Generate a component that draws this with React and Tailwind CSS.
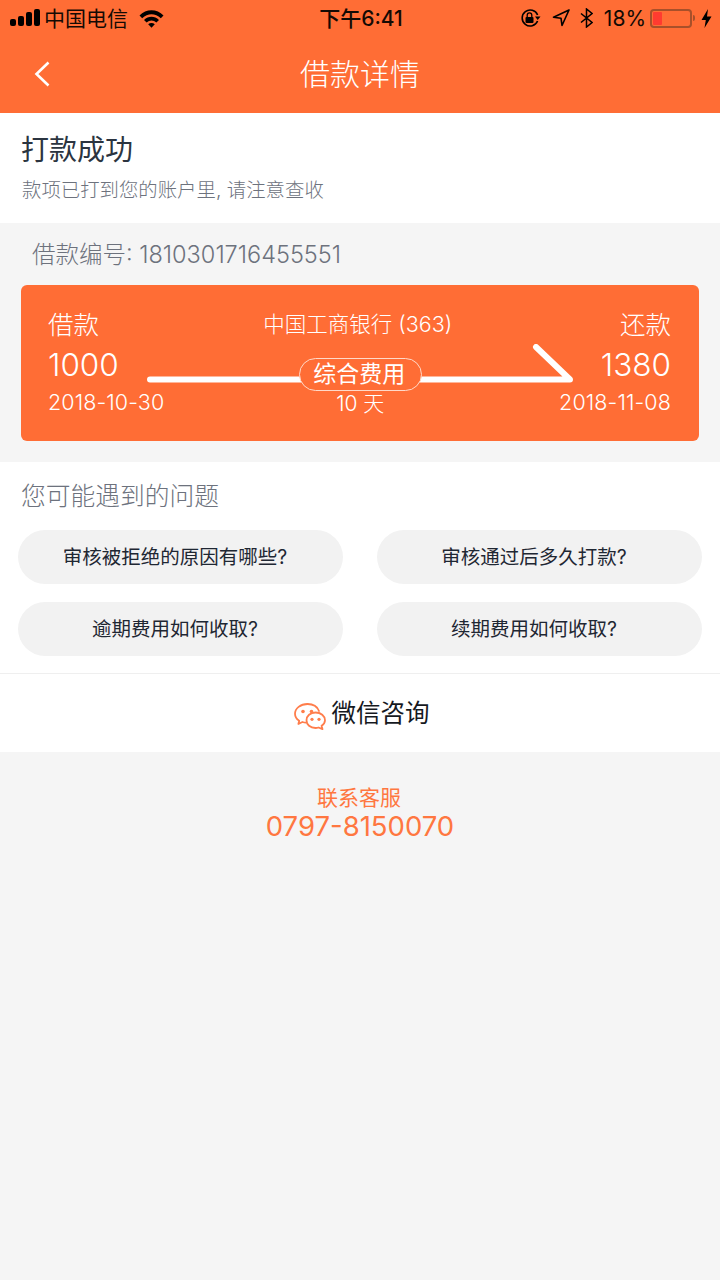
import React from "react";

const questions = [
  "审核被拒绝的原因有哪些?",
  "审核通过后多久打款?",
  "逾期费用如何收取?",
  "续期费用如何收取?",
];

function StatusBar() {
  return (
    <div className="h-[36px] flex items-center justify-between pl-[10px] pr-[8px] text-[#140a04]">
      <div className="flex items-center w-[240px]">
        <div className="flex items-end gap-[2px] h-[17px] mb-[1px]">
          <span className="w-[6px] h-[7px] bg-black rounded-[2px]" />
          <span className="w-[6px] h-[10px] bg-black rounded-[2px]" />
          <span className="w-[6px] h-[14px] bg-black rounded-[2px]" />
          <span className="w-[6px] h-[17px] bg-black rounded-[2px]" />
        </div>
        <span className="ml-[4px] text-[21px] leading-none">中国电信</span>
        <svg className="ml-[11px]" width="25" height="19" viewBox="0 0 25 19">
          <path d="M0.5 6.4 C7 -0.6 18 -0.6 24.5 6.4 L21.8 9.2 C16.4 3.8 8.6 3.8 3.2 9.2 Z" fill="#000" />
          <path d="M5 10.9 C9.4 6.6 15.6 6.6 20 10.9 L17.4 13.6 C14.4 10.8 10.6 10.8 7.6 13.6 Z" fill="#000" />
          <path d="M9.2 15.2 C11.1 13.5 13.9 13.5 15.8 15.2 L12.5 18.8 Z" fill="#000" />
        </svg>
      </div>
      <span className="text-[21px] leading-none font-medium">下午6:41</span>
      <div className="flex items-center justify-end w-[240px]">
        <svg width="21" height="20" viewBox="0 0 21 20" fill="none">
          <path d="M17.6 7 A8 8 0 1 0 17.6 13" stroke="#000" strokeWidth="1.6" />
          <path d="M15 8.5 L20.5 8.5 L17.7 12 Z" fill="#000" />
          <rect x="5.5" y="9" width="8" height="6" rx="1" fill="#000" />
          <path d="M7.2 9 V7.2 a2.3 2.3 0 0 1 4.6 0 V9" stroke="#000" strokeWidth="1.3" />
        </svg>
        <svg className="ml-[11px]" width="18" height="18" viewBox="0 0 18 18" fill="none">
          <path d="M17 1 L1.5 8.2 L9 9.2 L10 16.5 Z" stroke="#000" strokeWidth="1.6" strokeLinejoin="round" />
        </svg>
        <svg className="ml-[10px]" width="13" height="20" viewBox="0 0 13 20" fill="none">
          <path d="M1 5.5 L12 14.5 L6.5 19 V1 L12 5.5 L1 14.5" stroke="#000" strokeWidth="1.5" />
        </svg>
        <span className="ml-[11px] text-[21px] leading-none">18%</span>
        <div className="ml-[4px] w-[42px] h-[19px] border-2 border-[#a8502a] rounded-[4px] p-[1px]">
          <div className="w-[9px] h-full bg-[#ff3b30] rounded-[1px]" />
        </div>
        <span className="ml-[1px] w-[2px] h-[6px] bg-[#a8502a] rounded-r" />
        <svg className="ml-[6px]" width="11" height="19" viewBox="0 0 11 19">
          <path d="M7 0 L0.5 11 H4.8 L3.5 19 L10.5 7.5 H6 Z" fill="#000" />
        </svg>
      </div>
    </div>
  );
}

function Route() {
  return (
    <div className="relative h-[156px] mx-[21px] rounded-[6px] bg-[#ff6d35] text-white overflow-hidden">
      <svg className="absolute left-0 top-0 blur-[0.7px]" width="678" height="156" viewBox="0 0 678 156" fill="none">
        <path d="M129 94.5 H549 L515 62" stroke="#fff" strokeWidth="6" strokeLinecap="round" strokeLinejoin="round" />
      </svg>
      <div className="relative h-full pl-[27px] pr-[28px] pt-[25px] flex justify-between">
        <div className="flex flex-col items-start">
          <span className="text-[25.5px] leading-[30px] font-light">借款</span>
          <span className="mt-[7px] text-[31.5px] leading-[36px] font-light">1000</span>
          <span className="mt-[7px] text-[21.5px] leading-[24px] font-light tracking-[0.1px]">2018-10-30</span>
        </div>
        <div className="flex flex-col items-center pt-[2px] mr-[3px]">
          <span className="mr-[5px] text-[21.5px] leading-[24px] font-light">中国工商银行 (363)</span>
          <span className="mt-[22px] w-[123px] h-[33px] flex items-center justify-center pr-[2px] rounded-full border border-[#ffd9c8] bg-[#ff6d35] text-[23px] leading-none">综合费用</span>
          <span className="mt-[1px] text-[21px] leading-[24px] font-light">10 天</span>
        </div>
        <div className="flex flex-col items-end">
          <span className="text-[25.5px] leading-[30px] font-light">还款</span>
          <span className="mt-[7px] text-[31.5px] leading-[36px] font-light">1380</span>
          <span className="mt-[7px] text-[21.5px] leading-[24px] font-light tracking-[0.1px]">2018-11-08</span>
        </div>
      </div>
    </div>
  );
}

export default function App() {
  return (
    <div className="w-[720px] h-[1280px] bg-[#f5f5f5] overflow-hidden" style={{ fontFamily: 'Inter, "Noto Sans CJK SC", sans-serif' }}>
      <div className="h-[113px] bg-[#ff6d35]">
        <StatusBar />
        <div className="relative h-[77px] flex items-center justify-center pb-[1px]">
          <svg className="absolute left-[33px] top-[25px]" width="18" height="26" viewBox="0 0 18 26" fill="none">
            <path d="M15.5 1.5 L3.5 13 L15.5 24.5" stroke="#fff" strokeWidth="2.6" />
          </svg>
          <span className="text-[30px] leading-none text-white font-light">借款详情</span>
        </div>
      </div>

      <div className="h-[110px] bg-white px-[22px] pt-[21px]">
        <div className="-ml-[1px] text-[28px] leading-[32px] text-[#2b3440]">打款成功</div>
        <div className="mt-[11px] text-[19.4px] leading-[26px] font-light text-[#6d727d]">款项已打到您的账户里, 请注意查收</div>
      </div>

      <div className="h-[239px] pt-[18px]">
        <div className="h-[44px] pl-[32px] text-[23.5px] leading-[28px] font-light text-[#6d727d]">借款编号: 1810301716455551</div>
        <Route />
      </div>

      <div className="bg-white h-[212px] border-b border-[#efefef]">
        <div className="pl-[21px] pt-[19px] h-[68px] text-[24.75px] leading-[30px] font-light text-[#6d727d]">您可能遇到的问题</div>
        <div className="grid grid-cols-2 gap-x-[34px] gap-y-[18px] px-[18px]">
          {questions.map((q) => (
            <div key={q} className="h-[54px] rounded-full bg-[#f2f2f2] flex items-center justify-center pt-[1px] pr-[11px] text-[19.5px] text-[#1f2733]">{q}</div>
          ))}
        </div>
      </div>

      <div className="h-[78px] bg-white flex items-center justify-center pl-[3px]">
        <svg width="32" height="27" viewBox="0 0 32 27" fill="none" className="mt-[6px]">
          <path d="M13.5 1 C6.5 1 1 5.4 1 10.7 C1 13.6 2.6 16 5.2 17.7 L4.4 21 L8.4 19 C9.6 19.4 10.8 19.6 12 19.6" stroke="#ff7d4b" strokeWidth="1.8" strokeLinecap="round" strokeLinejoin="round" />
          <path d="M13.5 1 C19 1 23.4 3.8 25 8" stroke="#ff7d4b" strokeWidth="1.8" strokeLinecap="round" />
          <circle cx="9" cy="8.5" r="1.8" fill="#ff7d4b" />
          <circle cx="17.5" cy="8.5" r="1.8" fill="#ff7d4b" />
          <path d="M21.5 9.5 C16.2 9.5 12.5 13 12.5 17.3 C12.5 21.6 16.2 25 21.5 25 C22.6 25 23.6 24.8 24.6 24.5 L28.5 26.2 L27.6 22.8 C29.7 21.4 31 19.5 31 17.3 C31 13 26.8 9.5 21.5 9.5 Z" stroke="#ff7d4b" strokeWidth="1.8" strokeLinejoin="round" fill="#fff" />
          <circle cx="18" cy="16.3" r="1.6" fill="#ff7d4b" />
          <circle cx="25" cy="16.3" r="1.6" fill="#ff7d4b" />
        </svg>
        <span className="ml-[6px] text-[24.5px] leading-none text-[#16191f]">微信咨询</span>
      </div>

      <div className="pt-[33px] flex flex-col items-center text-[#ff7740]">
        <span className="mr-[2px] text-[21px] leading-[26px]">联系客服</span>
        <span className="text-[27.5px] leading-[30px]">0797-8150070</span>
      </div>
    </div>
  );
}
